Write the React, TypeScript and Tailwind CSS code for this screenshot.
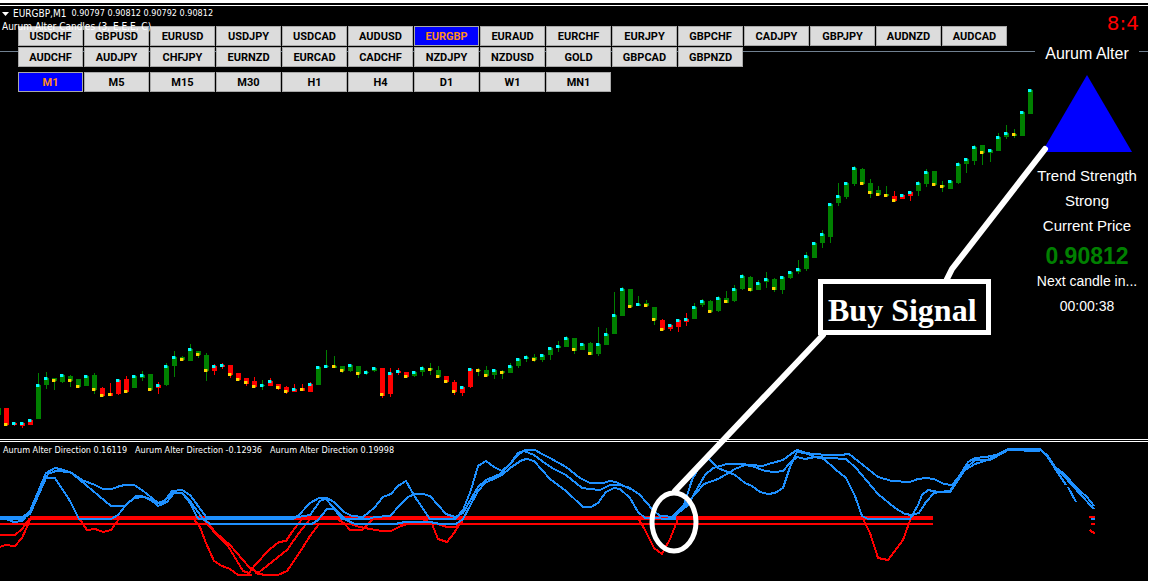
import React from "react";

// [color, high, bodyTop, bodyBottom, low, dot, dotY] one entry per bar, 8px apart
type Candle = [string, number, number, number, number, string, number];

const candles: Candle[] = [
  ["r", 408, 408, 425, 425, "y", 423],
  ["r", 422, 423, 425, 426, "c", 422],
  ["r", 422, 423, 426, 428, "c", 422],
  ["r", 419, 420, 425, 425, "c", 419],
  ["g", 373, 385, 419, 419, "c", 384],
  ["g", 372, 378, 385, 389, "c", 377],
  ["g", 378, 378, 381, 390, "y", 379],
  ["g", 374, 375, 382, 383, "c", 374],
  ["g", 375, 376, 381, 387, "y", 379],
  ["g", 379, 379, 387, 387, "y", 385],
  ["g", 375, 376, 386, 386, "c", 375],
  ["g", 373, 375, 390, 394, "y", 388],
  ["r", 387, 388, 396, 397, "y", 394],
  ["r", 383, 393, 396, 396, "y", 393],
  ["r", 379, 380, 394, 395, "c", 379],
  ["r", 376, 379, 392, 393, "y", 390],
  ["g", 375, 376, 388, 388, "c", 375],
  ["g", 371, 375, 378, 381, "c", 374],
  ["g", 374, 374, 390, 391, "y", 388],
  ["r", 382, 385, 388, 394, "c", 384],
  ["g", 363, 366, 385, 386, "c", 365],
  ["g", 351, 357, 366, 377, "c", 356],
  ["g", 356, 357, 360, 361, "y", 358],
  ["g", 344, 349, 361, 361, "c", 348],
  ["g", 351, 351, 355, 358, "y", 353],
  ["g", 353, 355, 371, 381, "y", 369],
  ["r", 364, 366, 371, 375, "c", 365],
  ["r", 363, 365, 367, 369, "c", 364],
  ["r", 365, 365, 375, 378, "y", 373],
  ["r", 373, 373, 380, 381, "y", 378],
  ["r", 378, 378, 384, 386, "y", 381],
  ["r", 377, 381, 387, 388, "y", 385],
  ["g", 380, 385, 386, 390, "c", 384],
  ["r", 378, 381, 386, 386, "c", 380],
  ["r", 384, 384, 389, 390, "y", 386],
  ["r", 386, 387, 392, 394, "y", 390],
  ["r", 384, 389, 392, 392, "c", 388],
  ["r", 384, 388, 391, 391, "y", 388],
  ["r", 382, 384, 392, 392, "c", 383],
  ["g", 366, 367, 385, 385, "c", 366],
  ["g", 350, 366, 367, 368, "c", 365],
  ["g", 356, 366, 368, 368, "y", 365],
  ["g", 366, 366, 371, 373, "y", 369],
  ["g", 364, 365, 371, 372, "c", 364],
  ["g", 366, 366, 374, 378, "y", 372],
  ["g", 370, 372, 373, 375, "c", 371],
  ["g", 367, 368, 371, 372, "c", 367],
  ["r", 368, 368, 396, 398, "y", 393],
  ["r", 368, 373, 394, 397, "c", 372],
  ["r", 368, 371, 373, 375, "c", 370],
  ["r", 372, 372, 377, 378, "y", 375],
  ["g", 371, 372, 376, 377, "c", 371],
  ["g", 366, 368, 372, 376, "c", 367],
  ["g", 363, 368, 370, 375, "y", 368],
  ["g", 366, 370, 377, 378, "y", 375],
  ["r", 376, 376, 382, 383, "y", 380],
  ["r", 380, 382, 392, 395, "y", 390],
  ["r", 386, 387, 393, 396, "c", 386],
  ["r", 368, 369, 387, 388, "c", 368],
  ["g", 368, 370, 371, 376, "y", 369],
  ["g", 366, 370, 376, 376, "y", 374],
  ["g", 369, 370, 375, 379, "c", 369],
  ["g", 370, 371, 373, 379, "y", 371],
  ["g", 363, 366, 373, 373, "c", 365],
  ["g", 358, 359, 366, 368, "c", 358],
  ["g", 355, 357, 359, 362, "c", 356],
  ["g", 354, 357, 360, 362, "y", 358],
  ["g", 354, 355, 360, 362, "c", 354],
  ["g", 347, 348, 355, 360, "c", 347],
  ["g", 341, 346, 348, 352, "c", 345],
  ["g", 336, 338, 347, 347, "c", 337],
  ["g", 338, 338, 351, 354, "y", 348],
  ["g", 343, 344, 350, 350, "c", 343],
  ["g", 342, 343, 355, 355, "y", 352],
  ["g", 327, 344, 354, 356, "c", 343],
  ["g", 328, 334, 345, 345, "c", 333],
  ["g", 292, 315, 334, 334, "c", 314],
  ["g", 287, 289, 316, 316, "c", 288],
  ["g", 289, 289, 307, 307, "y", 305],
  ["g", 296, 304, 306, 306, "c", 303],
  ["g", 300, 303, 306, 307, "y", 304],
  ["g", 307, 307, 320, 325, "y", 318],
  ["r", 319, 320, 330, 330, "y", 328],
  ["r", 324, 325, 329, 331, "c", 324],
  ["r", 319, 320, 327, 332, "c", 319],
  ["r", 313, 319, 322, 326, "c", 318],
  ["g", 303, 307, 319, 319, "c", 306],
  ["g", 299, 301, 305, 307, "c", 300],
  ["g", 300, 301, 312, 313, "y", 310],
  ["g", 296, 298, 311, 312, "c", 297],
  ["g", 291, 298, 303, 303, "y", 300],
  ["g", 285, 289, 301, 302, "c", 288],
  ["g", 274, 276, 289, 290, "c", 275],
  ["g", 276, 277, 291, 292, "y", 288],
  ["g", 280, 283, 290, 290, "c", 282],
  ["g", 272, 279, 282, 288, "c", 278],
  ["g", 278, 279, 290, 292, "y", 287],
  ["g", 276, 277, 290, 294, "c", 276],
  ["g", 271, 272, 278, 279, "c", 271],
  ["g", 260, 269, 272, 274, "c", 268],
  ["g", 252, 256, 269, 271, "c", 255],
  ["g", 242, 243, 258, 258, "c", 242],
  ["g", 230, 234, 243, 248, "c", 233],
  ["g", 203, 204, 237, 243, "c", 203],
  ["g", 183, 196, 203, 206, "c", 195],
  ["g", 182, 183, 197, 199, "c", 182],
  ["g", 166, 168, 184, 186, "c", 167],
  ["g", 168, 169, 184, 185, "y", 182],
  ["g", 179, 183, 194, 198, "y", 191],
  ["g", 186, 190, 195, 196, "y", 193],
  ["g", 186, 194, 196, 197, "y", 194],
  ["r", 191, 196, 201, 202, "y", 199],
  ["r", 194, 195, 199, 199, "c", 194],
  ["r", 191, 192, 196, 201, "c", 191],
  ["g", 181, 183, 191, 196, "c", 182],
  ["g", 169, 172, 184, 187, "c", 171],
  ["g", 171, 171, 185, 185, "y", 183],
  ["g", 181, 185, 187, 192, "y", 185],
  ["g", 180, 181, 189, 189, "c", 180],
  ["g", 162, 164, 183, 184, "c", 163],
  ["g", 158, 159, 164, 173, "c", 158],
  ["g", 145, 147, 161, 165, "c", 146],
  ["g", 145, 145, 153, 165, "y", 151],
  ["g", 149, 150, 153, 162, "c", 149],
  ["g", 133, 137, 151, 151, "c", 136],
  ["g", 125, 133, 137, 139, "c", 132],
  ["g", 129, 134, 136, 138, "y", 133],
  ["g", 111, 112, 136, 136, "c", 111],
  ["g", 90, 90, 114, 114, "c", 89],
];

const redLines = [
  "0,535 15,535 22,529 30,518",
  "0,547 5,545 15,546 22,538 30,520",
  "79,518 87,530 95,529 103,532 111,530 119,519",
  "193,518 200,527 206,543 214,561 222,566 230,569 238,575 252,575",
  "205,521 215,533 228,546 243,571 249,573 255,565 270,549 279,542 286,541 292,532 302,519",
  "207,521 215,532 230,545 249,567 258,573 287,550 299,533 310,519",
  "255,573 265,575 278,575 287,571 300,552 310,536 319,524",
  "337,519 344,523 350,530 362,530 370,522 375,518",
  "350,524 360,527 370,529 382,531 391,531 399,527 407,524",
  "421,518 432,524 438,539 447,542 454,533 463,519",
  "438,524 447,527 455,527 463,523",
  "638,518 645,530 654,548 662,554 670,539 678,519",
  "862,517 870,533 878,558 888,560 903,540 911,518",
  "1089,517 1095,517",
  "1091,524 1095,524",
  "1090,530 1092,532 1095,533",
];

const blueLines = [
  // left hump
  "0,518 22,518 30,511 46,473 55,468 60,469 70,472 82,480 95,485 103,489 112,489 120,486 125,485 134,485 142,490 152,498 158,503 164,502 172,491 182,490 190,495 207,518 290,518",
  "0,517 14,522 22,521 30,512 48,474 56,471 70,472 80,480 111,506 125,506 134,498 144,497 150,499 158,506 167,502 174,493 182,493 190,501 203,519 210,524 290,524",
  "0,519 22,519 30,514 46,478 55,478 70,501 79,519 111,519 118,515 126,505 136,496 142,496 150,500 158,503 164,501 172,493 182,493 190,503 197,517 199,519 293,519",
  // middle ripple
  "290,518 298,516 310,503 319,498 325,498 334,508 346,520 355,524 395,524 405,522 430,522 440,524 456,524 463,519 478,491 485,483 502,475 510,468 522,460 527,459 534,461 550,479 566,491 583,507 591,507 598,503 606,492 614,488 620,489 630,498 638,512 645,518 676,519",
  "290,519 298,517 310,515 320,501 327,498 334,502 344,512 352,516 363,517 374,508 383,497 391,494 398,486 406,481 415,497 430,519 455,519 463,510 471,490 478,466 486,461 494,467 502,471 510,464 518,453 524,451 534,455 542,461 552,468 566,475 582,488 590,489 600,490 610,485 620,485 630,488 640,495 653,510 660,516 676,517",
  "290,524 312,524 318,520 327,509 334,509 342,519 368,519 375,517 390,516 400,505 408,497 415,494 423,494 430,496 446,514 455,517 463,513 478,487 486,480 500,474 510,464 518,455 525,450 535,450 542,454 550,458 566,467 580,478 590,483 603,483 610,481 616,482 630,489",
  // right side
  "671,518 684,505 692,480 703,460 709,459 718,468 735,475 745,483 752,486 760,492 768,494 775,493 783,488 790,467 797,452 805,453 815,457 824,459 835,469 846,478 855,496 862,516 868,519 910,519 918,505 922,495 928,490 938,492 950,491 960,475 968,462 975,458 986,457 996,455 1008,449 1040,449 1047,456 1055,468 1063,475 1080,494 1094,509",
  "671,519 690,500 704,484 718,479 725,475 735,469 745,465 752,466 765,471 775,472 783,471 790,463 797,457 805,459 815,457 846,459 856,468 878,494 895,508 905,514 912,515 919,513 926,502 934,493 940,492 950,492 965,470 975,464 985,461 996,456 1008,450 1039,449 1047,455 1055,467 1063,473 1080,491 1087,497 1094,506",
  "671,519 688,505 705,475 713,468 727,464 740,464 762,466 772,463 783,460 791,454 797,450 803,452 812,454 830,455 840,455 849,454 858,461 878,477 892,481 910,482 918,479 926,478 934,479 944,484 952,485 966,468 975,460 990,460 1008,450 1040,451",
  "1054,467 1066,485",
  "1068,487 1076,502",
  "1091,519 1095,519",
];

const pairsTop = [
  "USDCHF", "GBPUSD", "EURUSD", "USDJPY", "USDCAD", "AUDUSD", "EURGBP", "EURAUD",
  "EURCHF", "EURJPY", "GBPCHF", "CADJPY", "GBPJPY", "AUDNZD", "AUDCAD",
];
const pairsBottom = [
  "AUDCHF", "AUDJPY", "CHFJPY", "EURNZD", "EURCAD", "CADCHF", "NZDJPY", "NZDUSD",
  "GOLD", "GBPCAD", "GBPNZD",
];
const timeframes = ["M1", "M5", "M15", "M30", "H1", "H4", "D1", "W1", "MN1"];

interface rowProps {
  items: string[];
  active?: string;
}

const ButtonRow = ({ items, active }: rowProps) => {
  return (
    <div className="flex gap-px">
      {items.map((item) => (
        <button
          key={item}
          type="button"
          className={
            item === active
              ? "w-[65px] h-5 flex items-center justify-center border border-[#a9a9a9] bg-[#0000ff] text-[#ff8c1a]"
              : "w-[65px] h-5 flex items-center justify-center border border-[#a9a9a9] bg-[#dcdcdc] text-black"
          }
        >
          {item}
        </button>
      ))}
    </div>
  );
};

const Candles = () => {
  return (
    <svg viewBox="0 6 1148 433" className="block w-full" shapeRendering="crispEdges">
      <rect x="0" y="51" width="1148" height="1" fill="#708090" />
      <rect x="0" y="408" width="1" height="7" fill="#008000" />
      {candles.map(([color, high, top, bottom, low, dot, dotY], i) => {
        const x = 4 + i * 8;
        const fill = color === "g" ? "#008000" : "#ff0000";
        const dotFill = dot === "c" ? "#00ffff" : "#ffd700";
        return (
          <g key={i}>
            <rect x={x + 2} y={high} width="1" height={low - high} fill={fill} />
            <rect x={x} y={top} width="5" height={bottom - top} fill={fill} />
            <rect x={x} y={dotY} width="3" height="3" fill={dotFill} />
            <rect x={x + 3} y={dotY} width="1" height="3" fill={dotFill} opacity="0.4" />
          </g>
        );
      })}
    </svg>
  );
};

const Direction = () => {
  return (
    <svg viewBox="0 442 1148 139" className="block w-full" shapeRendering="crispEdges">
      <rect x="30" y="516" width="903" height="4" fill="#ff0000" />
      <rect x="0" y="523" width="933" height="2" fill="#ff0000" />
      <g fill="none" stroke="#ff0000" strokeWidth="2">
        {redLines.map((points) => (
          <polyline key={points} points={points} />
        ))}
      </g>
      <rect x="0" y="516" width="22" height="4" fill="#1e90ff" />
      <rect x="206" y="516" width="88" height="4" fill="#1e90ff" />
      <g fill="none" stroke="#1e90ff" strokeWidth="2">
        {blueLines.map((points) => (
          <polyline key={points} points={points} />
        ))}
      </g>
    </svg>
  );
};

const SignalPanel = () => {
  return (
    <aside className="absolute top-[5px] right-[9px] w-[104px] flex flex-col items-center whitespace-nowrap text-[15px] leading-[25px] text-white">
      <div className="self-end font-['DejaVu_Sans'] text-[20px] text-[#ff0000]">8:4</div>
      <h1 className="w-full mt-[5px] bg-black text-center text-[16px]">Aurum Alter</h1>
      <svg viewBox="0 0 90 77" className="w-[90px] h-[77px] mt-[9px] mb-[11px]">
        <polygon points="45,0 90,77 0,77" fill="#0000ff" />
      </svg>
      <div>Trend Strength</div>
      <div>Strong</div>
      <div>Current Price</div>
      <div className="pt-[5px] text-[23px] leading-[26px] font-bold text-[#008000]">0.90812</div>
      <div className="text-[14px]">Next candle in...</div>
      <div className="text-[14px]">00:00:38</div>
    </aside>
  );
};

// callout box with its two pointers, lies over both charts
const BuySignal = () => {
  return (
    <svg viewBox="0 6 1148 575" className="absolute inset-x-0 top-0 w-full pointer-events-none">
      <g fill="none" stroke="#ffffff" strokeWidth="5" strokeLinecap="round" strokeLinejoin="round">
        <polyline points="1045,149 952,269 947,279" strokeWidth="6" />
        <line x1="823" y1="335" x2="675" y2="491" strokeWidth="6" />
        <ellipse cx="674" cy="522" rx="22" ry="29" />
      </g>
      <rect x="820.5" y="281.5" width="168" height="51" fill="#000000" stroke="#ffffff" strokeWidth="5" />
      <text x="828" y="321" fill="#ffffff" fontSize="32" className="font-['Liberation_Serif',serif] font-bold">
        Buy Signal
      </text>
    </svg>
  );
};

const App = () => {
  return (
    <div className="bg-white pt-[3px] pr-[2px] pb-[3px] font-['Liberation_Sans',sans-serif]">
      <div className="h-[3px] bg-black border-b border-white"></div>
      <main className="relative bg-black overflow-hidden">
        <section className="relative">
          <Candles />
          <div className="absolute top-5 left-[18px] flex flex-col gap-px font-['Roboto'] text-[11px] leading-none font-bold">
            <ButtonRow items={pairsTop} active="EURGBP" />
            <ButtonRow items={pairsBottom} />
            <div className="mt-1">
              <ButtonRow items={timeframes} active="M1" />
            </div>
          </div>
          <div className="absolute top-[1px] left-[2px] font-['DejaVu_Sans_Condensed','DejaVu_Sans'] text-[10px] leading-[13px] text-white whitespace-nowrap">
            <div className="flex items-center gap-1">
              <svg viewBox="0 0 7 4" className="w-[7px] h-1">
                <polygon points="0,0 7,0 3.5,4" fill="#ffffff" />
              </svg>
              <span>EURGBP,M1</span>
              <span className="text-[9px] ml-px">0.90797 0.90812 0.90792 0.90812</span>
            </div>
            <div>Aurum Alter Candles (3, E,E,E, C)</div>
          </div>
          <SignalPanel />
        </section>
        <div className="h-[3px] border-y border-white"></div>
        <section className="relative">
          <Direction />
          <div className="absolute top-[2px] left-[3px] flex gap-2 font-['DejaVu_Sans_Condensed','DejaVu_Sans'] text-[9px] leading-[13px] text-white whitespace-nowrap">
            <span>Aurum Alter Direction 0.16119</span>
            <span>Aurum Alter Direction -0.12936</span>
            <span>Aurum Alter Direction 0.19998</span>
          </div>
        </section>
        <BuySignal />
      </main>
    </div>
  );
};

export default App;
